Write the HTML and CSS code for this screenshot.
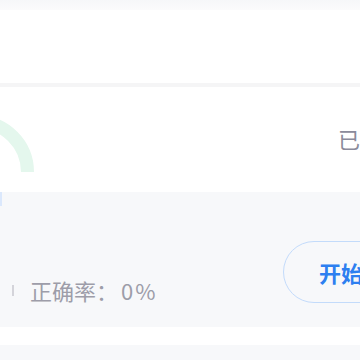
FILE: index.html
```html
<!DOCTYPE html>
<html lang="zh-CN">

<head>
  <meta charset="UTF-8">
  <title>练习</title>
  <meta name="viewport" content="width=device-width,initial-scale=1.0">
  <link rel="stylesheet" href="styles.css">
</head>

<body>
  <div class="page">
    <div class="top-strip"></div>
    <div class="header"></div>
    <div class="divider"></div>

    <!-- progress card -->
    <div class="card">
      <svg class="gauge" width="40" height="90" viewBox="0 0 40 90">
        <path d="M -73.5 85 A 50.5 50.5 0 0 1 27.5 85" fill="none" stroke="#e4f7ed" stroke-width="13" />
      </svg>
      <span class="done">已</span>
    </div>

    <!-- practice panel -->
    <div class="panel">
      <div class="tag-edge"></div>
      <div class="panel-body">
        <div class="stats">
          <span class="sep"></span>
          <span>正确率：</span>
          <span class="rate">0%</span>
        </div>
        <button class="start">开始</button>
      </div>
    </div>

    <div class="gap"></div>
    <div class="panel next"></div>
  </div>
</body>

</html>
```

FILE: styles.css
```css
html,
body {
  margin: 0;
  background: #fff;
  font-family: "Noto Sans CJK SC", "Noto Sans", sans-serif;
}

.page {
  width: 360px;
  height: 360px;
  overflow: hidden;
}

.top-strip {
  height: 10px;
  background: linear-gradient(#f6f7f9, #fbfbfc);
}

.header {
  height: 73px;
  background: #fff;
}

.divider {
  height: 4px;
  background: #f5f5f6;
}

.card {
  position: relative;
  height: 105px;
  display: flex;
  justify-content: flex-end;
  align-items: flex-start;
}

.gauge {
  position: absolute;
  left: 0;
  top: 0;
}

.done {
  margin-top: 38px;
  font-size: 22px;
  line-height: 26px;
  color: #8b8b9b;
}

.panel {
  background: #f7f8fa;
  height: 135px;
}

.tag-edge {
  width: 2px;
  height: 14px;
  background: #dbe8fc;
}

.panel-body {
  display: flex;
  justify-content: space-between;
  align-items: flex-end;
  padding: 35px 0 0 12px;
}

.stats {
  display: flex;
  align-items: center;
  font-size: 22px;
  line-height: 26px;
  color: #9d9da9;
}

.rate {
  margin-left: 3px;
  letter-spacing: 2px;
}

.sep {
  width: 2px;
  height: 11px;
  background: #d4d4da;
  margin-right: 16px;
}

.start {
  width: 120px;
  height: 62px;
  margin-right: -43px;
  padding: 0 0 0 35px;
  text-align: left;
  border: 1px solid #c3dbfa;
  border-radius: 31px;
  background: #f7f8fa;
  color: #2d7ff0;
  font-family: inherit;
  font-size: 22px;
  font-weight: 700;
  white-space: nowrap;
}

.gap {
  height: 18px;
}

.next {
  height: 15px;
}
```
